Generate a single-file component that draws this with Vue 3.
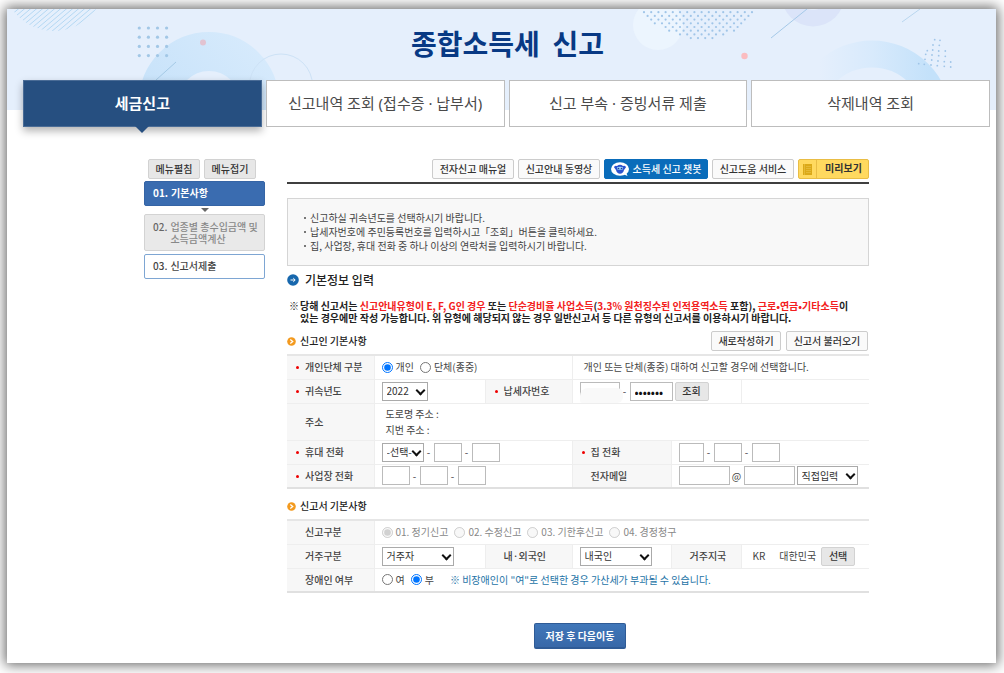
<script setup>
import { ref } from 'vue'

const tabs = ['세금신고', '신고내역 조회 (접수증 · 납부서)', '신고 부속 · 증빙서류 제출', '삭제내역 조회']
const filingTypes = ['01. 정기신고', '02. 수정신고', '03. 기한후신고', '04. 경정청구']

const entity = ref('개인')
const disabled = ref('부')
const password = ref('1234567')

const stripes = Array.from({ length: 14 }, (_, i) => 18 + i * 6)
const gridDots = []
for (let r = 0; r < 4; r++) for (let c = 0; c < 4; c++) gridDots.push([139.3 + c * 9.1, 28 + r * 9.2])

const halftone = []
for (let r = 0; r < 8; r++) {
  for (let c = 0; c < 17; c++) {
    const x = 644 + c * 7.2 + (r % 2 ? 3.6 : 0)
    const y = 12.2 + r * 3.7
    if (Math.hypot(x - 701, y + 35) < 74.5) halftone.push([x, y])
  }
}
const cluster = [
  [934.7, 39.7], [940, 40.3], [933, 45], [939.3, 45.3],
  [927.3, 50.7], [932.7, 50], [938.7, 51], [945.3, 51],
  [925.7, 54.3], [932, 55], [938.7, 55.7], [945.3, 56.3],
  [925, 59.3], [931.7, 60], [938, 61], [944.3, 61.7], [950.7, 62],
  [918.7, 63.7], [924.3, 64.3], [931, 65], [937.3, 65.7], [944.3, 66.3], [950.7, 67],
]
</script>

<template>
  <div class="page">
    <div class="sheet">
      <header class="hero">
        <svg class="deco deco-left" viewBox="7 9 333 101" width="333" height="101" aria-hidden="true">
          <defs>
            <clipPath id="stripeClip"><circle cx="54" cy="-20" r="51" /></clipPath>
            <linearGradient id="ringL" x1="0" y1="1" x2="1" y2="0">
              <stop offset="0" stop-color="#c3e0f9" /><stop offset="1" stop-color="#d6eafc" />
            </linearGradient>
          </defs>
          <g clip-path="url(#stripeClip)" stroke="#b4d8f3" stroke-width="1">
            <line v-for="x in stripes" :key="x" :x1="x + 5" y1="5" :x2="x - 40" y2="43" />
          </g>
          <circle cx="209" cy="102" r="50.5" fill="none" stroke="url(#ringL)" stroke-width="39" />
          <circle cx="281" cy="85.5" r="31.5" fill="none" stroke="#cde2f6" stroke-width="1" />
          <circle v-for="(d, i) in gridDots" :key="i" :cx="d[0]" :cy="d[1]" r="1.6" fill="#a2c7e6" />
          <line x1="156" y1="80" x2="176" y2="62" stroke="#a5cae6" stroke-width="1" />
          <circle cx="203" cy="42.5" r="3" fill="#e2c3d1" />
        </svg>
        <svg class="deco deco-right" viewBox="630 9 366 101" width="366" height="101" aria-hidden="true">
          <defs>
            <linearGradient id="ringR" x1="0" y1="0" x2="1" y2="0">
              <stop offset="0.1" stop-color="#e5effc" /><stop offset="0.5" stop-color="#d8eafc" /><stop offset="0.95" stop-color="#c3e1fa" />
            </linearGradient>
          </defs>
          <circle cx="658" cy="25" r="25" fill="#ecf5fe" />
          <circle v-for="(d, i) in halftone" :key="'h' + i" :cx="d[0]" :cy="d[1]" r="1.1" fill="#a0c5e8" />
          <circle cx="813" cy="-5" r="31.5" fill="#dbe4f9" />
          <circle cx="813" cy="-5" r="15" fill="#e5effc" />
          <line x1="771" y1="38" x2="807" y2="9" stroke="#a5c9e8" stroke-width="1" />
          <line x1="902" y1="22" x2="920" y2="9" stroke="#b9d6ee" stroke-width="1" />
          <circle cx="744.5" cy="56" r="3.2" fill="#fbbcc0" />
          <circle cx="872" cy="120" r="66" fill="none" stroke="url(#ringR)" stroke-width="27" />
          <circle v-for="(d, i) in cluster" :key="'c' + i" :cx="d[0]" :cy="d[1]" r="0.9" fill="#a0c5e8" />
        </svg>
        <h1>종합소득세&nbsp; 신고</h1>
        <nav class="tabs">
          <a v-for="(t, i) in tabs" :key="t" href="#" :class="{ active: i === 0 }">{{ t }}</a>
        </nav>
      </header>

      <div class="content">
        <aside>
          <div class="fold">
            <button type="button" class="gray">메뉴펼침</button>
            <button type="button" class="gray">메뉴접기</button>
          </div>
          <a href="#" class="step current"><span>01.</span><span>기본사항</span></a>
          <i class="down"></i>
          <a href="#" class="step muted"><span>02.</span><span>업종별 총수입금액 및 소득금액계산</span></a>
          <a href="#" class="step"><span>03.</span><span>신고서제출</span></a>
        </aside>

        <main>
          <div class="toolbar">
            <button type="button" class="btn">전자신고 매뉴얼</button>
            <button type="button" class="btn">신고안내 동영상</button>
            <button type="button" class="btn chat">
              <svg width="18" height="15" viewBox="0 0 18 15" aria-hidden="true">
                <ellipse cx="9" cy="7" rx="9" ry="6.8" fill="#fff" />
                <path d="M12 12l3-2 1.500 4z" fill="#fff" />
                <path d="M3 5.200Q3.500 3 6 4Q9 1.500 12 4Q14.500 3 15 5.200L13 8Q12 11.800 9 11.800Q6 11.800 5 8Z" fill="#2d54cf" />
                <path d="M6 5.300Q9 4 12 5.300L11.500 7.800H6.500Z" fill="#9bd3f5" />
                <circle cx="7.500" cy="6.500" r="0.800" fill="#173a9c" /><circle cx="10.500" cy="6.500" r="0.800" fill="#173a9c" />
              </svg>
              소득세 신고 챗봇
            </button>
            <button type="button" class="btn">신고도움 서비스</button>
            <button type="button" class="btn preview">
              <span class="book">
                <svg width="9" height="11" viewBox="0 0 9 11" aria-hidden="true">
                  <rect width="9" height="11" fill="#dba918" />
                  <path d="M1.500 0v11M3 2.500h5M3 4.500h5M3 6.500h5M3 8.500h5" stroke="#e8c044" stroke-width="0.700" />
                </svg>
              </span>
              <span class="plabel">미리보기</span>
            </button>
          </div>

          <ul class="notice">
            <li>신고하실 귀속년도를 선택하시기 바랍니다.</li>
            <li>납세자번호에 주민등록번호를 입력하시고「조회」버튼을 클릭하세요.</li>
            <li>집, 사업장, 휴대 전화 중 하나 이상의 연락처를 입력하시기 바랍니다.</li>
          </ul>

          <h2>
            <svg width="12" height="12" viewBox="0 0 12 12" aria-hidden="true">
              <circle cx="6" cy="6" r="5.8" fill="#1767ad" />
              <path d="M3.500 6h4.500M6.300 4.200L8.200 6 6.300 7.800" fill="none" stroke="#fff" stroke-width="1" />
            </svg>
            기본정보 입력
          </h2>
          <div class="remark">
            <span>※</span>
            <p>당해 신고서는 <em>신고안내유형이 E, F, G인 경우</em> 또는 <em>단순경비율 사업소득</em>(<em>3.3% 원천징수된 인적용역소득</em> 포함), <em>근로•연금•기타소득</em>이<br>있는 경우에만 작성 가능합니다. 위 유형에 해당되지 않는 경우 일반신고서 등 다른 유형의 신고서를 이용하시기 바랍니다.</p>
          </div>

          <div class="subhead">
            <h3>
              <svg width="9" height="9" viewBox="0 0 9 9" aria-hidden="true">
                <circle cx="4.500" cy="4.500" r="4.300" fill="#f39a1f" />
                <path d="M3.300 2.500L5.700 4.500 3.300 6.500" fill="none" stroke="#fff" stroke-width="1.300" />
              </svg>
              신고인 기본사항
            </h3>
            <button type="button" class="btn small">새로작성하기</button>
            <button type="button" class="btn">신고서 불러오기</button>
          </div>

          <table>
            <colgroup><col class="c1"><col class="c2"><col class="c3"><col class="c4"><col class="c5"><col></colgroup>
            <tbody>
              <tr>
                <th scope="row" class="req">개인단체 구분</th>
                <td colspan="2">
                  <div class="line">
                    <label><input v-model="entity" type="radio" name="entity" value="개인">개인</label>
                    <label><input v-model="entity" type="radio" name="entity" value="단체">단체(종중)</label>
                  </div>
                </td>
                <td colspan="3" class="bl hint">개인 또는 단체(종중) 대하여 신고할 경우에 선택합니다.</td>
              </tr>
              <tr>
                <th scope="row" class="req">귀속년도</th>
                <td><div class="line"><span class="sel w46"><select aria-label="귀속년도"><option>2022</option></select></span></div></td>
                <th scope="row" class="req">납세자번호</th>
                <td colspan="2">
                  <div class="line">
                    <span class="masked"><input type="text" class="w40" aria-label="납세자번호 앞자리"></span>
                    <span class="dash">-</span>
                    <input v-model="password" type="password" class="w43 pw" aria-label="납세자번호 뒷자리">
                    <button type="button" class="gray look">조회</button>
                  </div>
                </td>
                <td class="bl"></td>
              </tr>
              <tr class="tall">
                <th scope="row">주소</th>
                <td colspan="5" class="addr">도로명 주소 :<br>지번 주소 :</td>
              </tr>
              <tr>
                <th scope="row" class="req">휴대 전화</th>
                <td colspan="2">
                  <div class="line">
                    <span class="sel w42"><select aria-label="휴대 전화 국번"><option>-선택-</option></select></span><span class="dash">-</span>
                    <input type="text" class="w28" aria-label="휴대 전화 가운데 번호"><span class="dash">-</span>
                    <input type="text" class="w28" aria-label="휴대 전화 끝 번호">
                  </div>
                </td>
                <th scope="row" class="req">집 전화</th>
                <td colspan="2">
                  <div class="line">
                    <input type="text" class="w25" aria-label="집 전화 지역번호"><span class="dash">-</span>
                    <input type="text" class="w28" aria-label="집 전화 가운데 번호"><span class="dash">-</span>
                    <input type="text" class="w28" aria-label="집 전화 끝 번호">
                  </div>
                </td>
              </tr>
              <tr>
                <th scope="row" class="req">사업장 전화</th>
                <td colspan="2">
                  <div class="line">
                    <input type="text" class="w28" aria-label="사업장 전화 지역번호"><span class="dash">-</span>
                    <input type="text" class="w28" aria-label="사업장 전화 가운데 번호"><span class="dash">-</span>
                    <input type="text" class="w28" aria-label="사업장 전화 끝 번호">
                  </div>
                </td>
                <th scope="row">전자메일</th>
                <td colspan="2">
                  <div class="line">
                    <input type="text" class="w51" aria-label="전자메일 아이디"><span class="at">@</span>
                    <input type="text" class="w51" aria-label="전자메일 도메인">
                    <span class="sel w61"><select aria-label="전자메일 도메인 선택"><option>직접입력</option></select></span>
                  </div>
                </td>
              </tr>
            </tbody>
          </table>

          <div class="subhead">
            <h3>
              <svg width="9" height="9" viewBox="0 0 9 9" aria-hidden="true">
                <circle cx="4.500" cy="4.500" r="4.300" fill="#f39a1f" />
                <path d="M3.300 2.500L5.700 4.500 3.300 6.500" fill="none" stroke="#fff" stroke-width="1.300" />
              </svg>
              신고서 기본사항
            </h3>
          </div>

          <table>
            <colgroup><col class="c1"><col class="c2"><col class="c3"><col class="c4"><col class="c5"><col></colgroup>
            <tbody>
              <tr>
                <th scope="row">신고구분</th>
                <td colspan="5">
                  <div class="line">
                    <label v-for="(f, i) in filingTypes" :key="f" class="off"><input type="radio" name="filing" disabled :checked="i === 0">{{ f }}</label>
                  </div>
                </td>
              </tr>
              <tr>
                <th scope="row">거주구분</th>
                <td><div class="line"><span class="sel w72"><select aria-label="거주구분"><option>거주자</option></select></span></div></td>
                <th scope="row">내·외국인</th>
                <td><div class="line"><span class="sel w72"><select aria-label="내·외국인"><option>내국인</option></select></span></div></td>
                <th scope="row">거주지국</th>
                <td>
                  <div class="line country"><span>KR</span><span>대한민국</span><button type="button" class="gray look">선택</button></div>
                </td>
              </tr>
              <tr>
                <th scope="row">장애인 여부</th>
                <td colspan="5">
                  <div class="line">
                    <label><input v-model="disabled" type="radio" name="disabled" value="여">여</label>
                    <label><input v-model="disabled" type="radio" name="disabled" value="부">부</label>
                    <span class="info">※ 비장애인이 "여"로 선택한 경우 가산세가 부과될 수 있습니다.</span>
                  </div>
                </td>
              </tr>
            </tbody>
          </table>

          <div class="submit"><button type="button">저장 후 다음이동</button></div>
        </main>
      </div>
    </div>
  </div>
</template>

<style>
body { background: #fff; }
</style>

<style scoped>
.page {
  box-sizing: border-box;
  display: flex;
  min-height: 100vh;
  padding: 9px 8px 10px 7px;
  overflow: hidden;
  font: 10px/14px "Noto Sans CJK KR", sans-serif;
  color: #444;
}
.page * { box-sizing: border-box; }
.sheet {
  flex: 1;
  min-width: 0;
  background: #fff;
  box-shadow: 0 0 12px 2px rgba(0, 0, 0, 0.6);
  padding-bottom: 14px;
}
button, input, select { font: inherit; color: inherit; margin: 0; }
button { padding: 0; cursor: pointer; white-space: nowrap; }
a { text-decoration: none; }

.hero { position: relative; height: 101px; background: #e5effc; }
.deco { position: absolute; top: 0; }
.deco-left { left: 0; }
.deco-right { right: 0; }
h1 {
  position: relative;
  margin: 0;
  padding-left: 12px;
  height: 71px;
  text-align: center;
  font-size: 28px;
  line-height: 68px;
  font-weight: 700;
  color: #083984;
}
.tabs { position: relative; display: grid; grid-template-columns: repeat(4, 1fr); gap: 4px; padding: 0 6px 0 16px; }
.tabs a {
  position: relative;
  height: 47px;
  border: 1px solid #bdbdbd;
  background: #fff;
  color: #4a4a4a;
  font-family: "Noto Sans", "Noto Sans CJK KR", sans-serif;
  font-size: 15px;
  line-height: 44px;
  text-align: center;
  white-space: nowrap;
}
.tabs a.active {
  background: #264f80;
  border-color: #4a6c96;
  color: #fff;
  font-weight: 700;
  box-shadow: 0 4px 8px rgba(0, 0, 0, 0.3);
}
.tabs a.active::after {
  content: "";
  position: absolute;
  left: 50%;
  top: 100%;
  margin-left: -7px;
  border: 7px solid transparent;
  border-top-color: #264f80;
  border-bottom-width: 0;
}

.content {
  display: grid;
  grid-template-columns: 121px minmax(0, 1fr);
  gap: 22px;
  padding: 49px 127px 0 137px;
}

.gray {
  height: 20px;
  border: 1px solid #d2d2d2;
  border-radius: 2px;
  background: #e7e7e7;
  font-weight: 500;
  color: #333;
  line-height: 16px;
}
.fold { display: grid; grid-template-columns: 1fr 1fr; gap: 4px; padding: 0 9px 0 4px; margin-bottom: 2px; }
.step {
  display: flex;
  gap: 3px;
  padding: 4px 6px 5px 8px;
  border: 1px solid #7ea6d3;
  border-radius: 2px;
  background: #fff;
  color: #444;
  font-weight: 500;
  line-height: 14px;
}
.current { background: #3a6cb0; border-color: #3564a5; color: #fff; font-weight: 700; }
.muted { background: #e9e9e9; border-color: #d3d3d3; color: #888; line-height: 12px; margin-bottom: 3px; padding: 6px 4px 5px 8px; }
.muted span:first-child { color: #666; }
.down {
  display: block;
  width: 0;
  margin: 2px auto;
  border: 4px solid transparent;
  border-top-color: #666;
  border-bottom-width: 0;
}

.toolbar { display: flex; justify-content: flex-end; gap: 4px; padding-bottom: 3px; border-bottom: 2px solid #3f3f3f; }
.btn {
  width: 82px;
  height: 20px;
  padding: 0;
  border: 1px solid #ccc;
  border-radius: 2px;
  background: #fafafa;
  color: #333;
  font-weight: 500;
  line-height: 16px;
}
.chat {
  display: flex;
  align-items: center;
  justify-content: center;
  gap: 4px;
  width: 104px;
  border-color: #0a6cba;
  background: #0a6cba;
  color: #fff;
}
.preview { display: flex; width: 71px; background: #ffd95f; border-color: #e9bd45; font-weight: 700; }
.book { display: flex; align-items: center; justify-content: center; width: 18px; height: 100%; border-right: 1px solid #e9bd45; }
.plabel { flex: 1; padding-left: 2px; }

.notice {
  list-style: none;
  margin: 14px 0 0;
  padding: 12px 14px;
  border: 1px solid #d5d5d5;
  background: #f8f8f8;
}
.notice li { position: relative; padding-left: 8px; }
.notice li::before { content: ""; position: absolute; left: 2px; top: 6px; width: 2px; height: 2px; background: #777; }

h2 {
  display: flex;
  align-items: center;
  gap: 6px;
  margin: 6px 0 0;
  font-size: 12px;
  line-height: 16px;
  font-weight: 500;
  color: #222;
}
.remark { display: grid; grid-template-columns: 11px 1fr; margin: 12px 0 0 2px; line-height: 12px; color: #222; font-weight: 700; }
.remark p { margin: 0; white-space: nowrap; }
em { font-style: normal; color: #f32020; }

.subhead { display: flex; align-items: center; gap: 5px; height: 20px; margin: 7px 1px 3px 0; }
.small { width: 70px; }
h3 { display: flex; align-items: center; gap: 4px; margin: 0 auto 0 0; font-size: 10px; font-weight: 500; color: #222; }

table { width: 100%; table-layout: fixed; border-collapse: collapse; border-top: 2px solid #e6e6e6; border-bottom: 2px solid #e0e0e0; }
.c1 { width: 87px; }
.c2 { width: 111px; }
.c3 { width: 87px; }
.c4 { width: 99px; }
.c5 { width: 70px; }
tr { height: 24px; border-top: 1px solid #eee; }
.tall { height: 37px; }
th, td { padding: 0 7px; text-align: left; }
th { position: relative; padding: 0 0 0 18px; background: #f7f7f7; border-right: 1px solid #eee; font-weight: 500; color: #444; }
td + th { border-left: 1px solid #eee; }
.req::before { content: ""; position: absolute; left: 9px; top: 50%; margin-top: -1px; width: 3px; height: 3px; border-radius: 50%; background: #e00; }
.bl { border-left: 1px solid #eee; }
.hint, .addr { padding-left: 11px; }
.addr { line-height: 16px; }
.line { display: flex; align-items: center; height: 22px; white-space: nowrap; }
label { display: flex; align-items: center; gap: 3px; margin-right: 6px; }
label input { width: 11px; height: 11px; }
.off { color: #888; }
.line input:not([type="radio"]) { height: 19px; padding: 0 4px; border: 1px solid #bbb; background: #fff; }
.sel { position: relative; display: flex; height: 19px; }
.sel select { appearance: none; width: 100%; height: 100%; padding: 0 0 0 4px; border: 1px solid #aaa; border-radius: 0; background: #fff; color: #333; }
.sel::after {
  content: "";
  position: absolute;
  right: 4px;
  top: 5px;
  width: 5px;
  height: 5px;
  border: solid #111;
  border-width: 0 2px 2px 0;
  transform: rotate(45deg);
  pointer-events: none;
}
.dash { width: 10px; text-align: center; }
.at { width: 14px; text-align: center; }
.w25 { width: 25px; }
.w28 { width: 28px; }
.w40 { width: 40px; }
.w42 { width: 42px; }
.w43 { width: 43px; }
.w46 { width: 46px; }
.w51 { width: 51px; }
.w61 { width: 61px; margin-left: 2px; }
.w72 { width: 72px; }
.pw { color: #111; font-size: 12px; }
.masked { position: relative; display: flex; }
.masked::after { content: ""; position: absolute; left: 0; right: -3px; bottom: -2px; height: 15px; border-radius: 8px 6px 6px 2px; background: #f9f9f9; }
.look { width: 34px; height: 19px; margin-left: 2px; }
.country { padding-left: 4px; }
.country span + span { margin-left: 14px; }
.country .look { margin-left: 5px; }
.info { margin-left: 10px; color: #2473a6; }

.submit { display: flex; justify-content: center; margin: 30px 0 0; padding-left: 4px; }
.submit button {
  width: 92px;
  height: 26px;
  border: 1px solid #2f5b96;
  border-bottom-width: 2px;
  border-radius: 2px;
  background: linear-gradient(#4077b9, #3868a8);
  color: #fff;
  font-weight: 700;
}
</style>
